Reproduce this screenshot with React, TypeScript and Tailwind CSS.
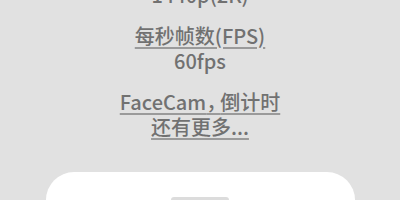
export default function App() {
  const link =
    "underline decoration-[#9a9a9a] decoration-2 underline-offset-[3px]";

  return (
    <div className="h-[200px] w-[400px] overflow-hidden bg-[#e1e1e1] font-['Noto_Sans_CJK_SC','Noto_Sans',sans-serif] font-medium text-[#717171]">
      <div className="-mt-[18px] flex flex-col items-center gap-4 text-[20px] leading-[25px]">
        <div>1440p(2K)</div>
        <div className="flex flex-col items-center">
          <span className={link}>每秒帧数(FPS)</span>
          <span>60fps</span>
        </div>
        <div className="flex flex-col items-center">
          <span className={link}>
            FaceCam<span className="tracking-[-6px]">，</span>倒计时
          </span>
          <span className={link}>还有更多...</span>
        </div>
      </div>
      <div className="mx-auto mt-[33px] flex h-[60px] w-[309px] justify-center rounded-t-[28px] bg-white pt-[25px]">
        <div className="h-[6px] w-[58px] rounded-full bg-[#dcdcdc]" />
      </div>
    </div>
  );
}
